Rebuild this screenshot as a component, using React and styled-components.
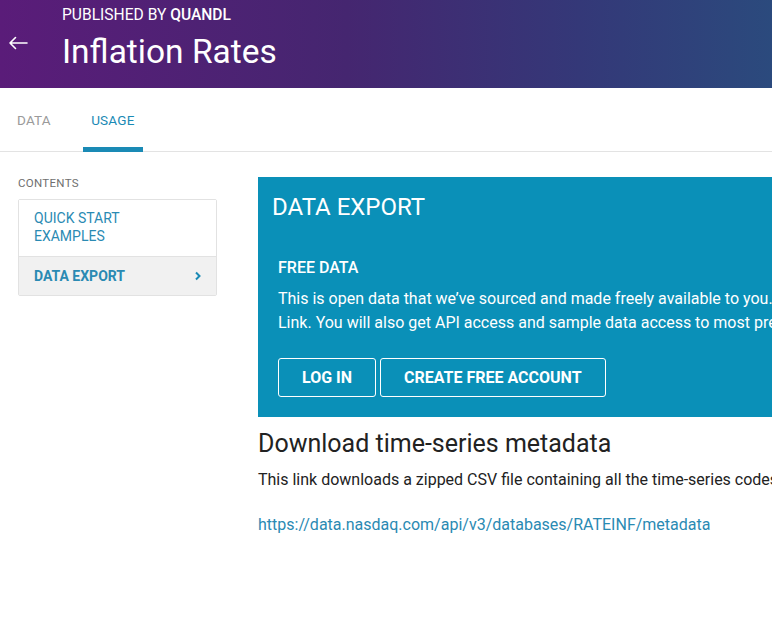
import styled, { createGlobalStyle } from 'styled-components';

const GlobalStyle = createGlobalStyle`
  body {
    margin: 0;
    overflow: hidden;
    font-family: Roboto, "Liberation Sans", Arial, sans-serif;
    background: #fff;
    color: #222;
  }
`;

function App() {
  return (
    <Page>
      <GlobalStyle />
      <Header>
        <BackButton aria-label="back">
          <svg width="20" height="14" viewBox="0 0 20 14" fill="none">
            <path d="M19 7H2M7.5 1.5L2 7l5.5 5.5" stroke="#fff" strokeWidth="1.6" strokeLinecap="round" strokeLinejoin="round" />
          </svg>
        </BackButton>
        <HeaderText>
          <Publisher>
            PUBLISHED BY <strong>QUANDL</strong>
          </Publisher>
          <Title>Inflation Rates</Title>
        </HeaderText>
      </Header>

      <Tabs>
        <Tab>DATA</Tab>
        <Tab $active>USAGE</Tab>
      </Tabs>

      <Body>
        <Sidebar>
          <SidebarLabel>CONTENTS</SidebarLabel>
          <TocList>
            <TocItem>QUICK START EXAMPLES</TocItem>
            <TocItem $active>
              DATA EXPORT
              <Chevron>
                <svg width="8" height="10" viewBox="0 0 8 10">
                  <path d="M2 1.5L5.5 5 2 8.5" stroke="#1a8ab5" strokeWidth="2" fill="none" />
                </svg>
              </Chevron>
            </TocItem>
          </TocList>
        </Sidebar>

        <Main>
          <ExportPanel>
            <PanelTitle>DATA EXPORT</PanelTitle>
            <PanelSection>
              <SectionTitle>FREE DATA</SectionTitle>
              <PanelText>
                This is open data that we’ve sourced and made freely available to you. Anyone can access it with a free account on Nasdaq Data
                <br />
                Link. You will also get API access and sample data access to most premium datasets.
              </PanelText>
              <ButtonRow>
                <OutlineButton>LOG IN</OutlineButton>
                <OutlineButton>CREATE FREE ACCOUNT</OutlineButton>
              </ButtonRow>
            </PanelSection>
          </ExportPanel>

          <SubHeading>Download time-series metadata</SubHeading>
          <Paragraph>
            This link downloads a zipped CSV file containing all the time-series codes in this database, along with their names and descriptions.
          </Paragraph>
          <MetaLink href="#">https://data.nasdaq.com/api/v3/databases/RATEINF/metadata</MetaLink>
        </Main>
      </Body>
    </Page>
  );
}

const Page = styled.div`
  width: 100%;
  min-height: 639px;
`;

const Header = styled.header`
  display: flex;
  height: 88px;
  background: linear-gradient(90deg, #5a1c79 0%, #452670 45%, #343878 75%, #2b4a7d 100%);
  color: #fff;
`;

const BackButton = styled.div`
  width: 62px;
  padding: 35px 0 0 8px;
  box-sizing: border-box;
`;

const HeaderText = styled.div`
  display: flex;
  flex-direction: column;
  padding-top: 5px;
`;

const Publisher = styled.div`
  font-size: 15.6px;
  line-height: 20px;

  strong {
    font-weight: 500;
  }
`;

const Title = styled.h1`
  margin: 6px 0 0;
  font-size: 33.5px;
  font-weight: 400;
  line-height: 42px;
`;

const Tabs = styled.nav`
  display: flex;
  border-bottom: 1px solid #e3e3e3;
  height: 64px;
  box-sizing: border-box;
`;

const Tab = styled.div`
  display: flex;
  align-items: center;
  justify-content: center;
  width: ${(p) => (p.$active ? '60px' : 'auto')};
  padding: ${(p) => (p.$active ? '5px 0 0' : '5px 16px 0 17px')};
  margin-right: ${(p) => (p.$active ? '0' : '16px')};
  font-size: 13.5px;
  letter-spacing: 0.2px;
  color: ${(p) => (p.$active ? '#1a8ab5' : '#9a9a9a')};
  border-bottom: 5px solid ${(p) => (p.$active ? '#1a8ab5' : 'transparent')};
  margin-bottom: -1px;
  box-sizing: border-box;
`;

const Body = styled.div`
  display: grid;
  grid-template-columns: 199px 1100px;
  column-gap: 41px;
  padding: 24px 0 0 18px;
`;

const Sidebar = styled.aside`
  display: flex;
  flex-direction: column;
`;

const SidebarLabel = styled.div`
  font-size: 11.5px;
  letter-spacing: 0.3px;
  color: #6f6f6f;
  line-height: 14px;
  margin-bottom: 9px;
`;

const TocList = styled.div`
  border: 1px solid #e2e2e2;
  border-radius: 2px;
`;

const TocItem = styled.div`
  display: flex;
  align-items: center;
  justify-content: space-between;
  padding: ${(p) => (p.$active ? '10px 14px 10px 15px' : '9px 60px 11px 15px')};
  font-size: 14px;
  line-height: 18px;
  color: #2a8ab3;
  font-weight: ${(p) => (p.$active ? 700 : 400)};
  background: ${(p) => (p.$active ? '#f1f1f1' : '#fff')};
  border-top: ${(p) => (p.$active ? '1px solid #e2e2e2' : 'none')};
`;

const Chevron = styled.span`
  display: flex;
  align-items: center;
`;

const Main = styled.main`
  display: flex;
  flex-direction: column;
`;

const ExportPanel = styled.section`
  background: #0a90b8;
  color: #fff;
  padding: 15px 14px 20px;
  margin-top: 1px;
`;

const PanelTitle = styled.h2`
  margin: 0;
  font-size: 24px;
  font-weight: 400;
  line-height: 30px;
`;

const PanelSection = styled.div`
  padding: 36px 0 0 6px;
`;

const SectionTitle = styled.h3`
  margin: 0;
  font-size: 16px;
  font-weight: 500;
  line-height: 20px;
`;

const PanelText = styled.p`
  margin: 9px 0 0;
  font-size: 16px;
  line-height: 24px;
  white-space: nowrap;
`;

const ButtonRow = styled.div`
  display: flex;
  gap: 4px;
  margin-top: 23px;
`;

const OutlineButton = styled.button`
  height: 39px;
  padding: 0 23px;
  background: transparent;
  border: 1px solid #fff;
  border-radius: 3px;
  color: #fff;
  font-family: Roboto, "Liberation Sans", Arial, sans-serif;
  font-size: 16px;
  font-weight: 700;
`;

const SubHeading = styled.h2`
  margin: 12px 0 0;
  font-size: 25px;
  font-weight: 400;
  line-height: 30px;
  color: #222;
`;

const Paragraph = styled.p`
  margin: 11px 0 0;
  font-size: 16px;
  line-height: 20px;
  color: #222;
  white-space: nowrap;
`;

const MetaLink = styled.a`
  margin-top: 25px;
  font-size: 16px;
  line-height: 20px;
  color: #2a8ab3;
  text-decoration: none;
  align-self: flex-start;
`;

export default App;
